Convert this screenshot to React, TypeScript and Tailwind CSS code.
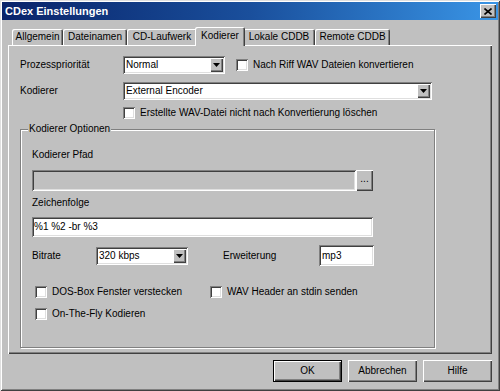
import React from "react";

const raised =
  "shadow-[inset_1px_1px_0_#fff,inset_-1px_-1px_0_#404040,inset_-2px_-2px_0_#808080]";
const sunken =
  "shadow-[inset_1px_1px_0_#808080,inset_-1px_-1px_0_#fff,inset_2px_2px_0_#404040,inset_-2px_-2px_0_#dfdfdf]";

function Arrow() {
  return (
    <svg width="7" height="4" viewBox="0 0 7 4">
      <path d="M0 0H7L3.5 4Z" fill="#000" />
    </svg>
  );
}

function Select({ value, w }: { value: string; w: string }) {
  return (
    <div className={`flex h-[18px] ${w} bg-white p-[2px] ${sunken}`}>
      <div className="flex flex-1 items-center pl-[1px]">{value}</div>
      <div
        className={`flex h-[14px] w-[13px] items-center justify-center bg-[#c0c0c0] ${raised}`}
      >
        <Arrow />
      </div>
    </div>
  );
}

function Check({ label, gap }: { label: string; gap?: boolean }) {
  return (
    <div className="flex items-center">
      <div className={`h-[12px] w-[12px] bg-white ${sunken}`} />
      <span className={gap ? "ml-[5px]" : "ml-[5px]"}>{label}</span>
    </div>
  );
}

function Tab({
  label,
  w,
  active,
}: {
  label: string;
  w: string;
  active?: boolean;
}) {
  if (active) {
    return (
      <div
        className={`relative z-10 -mx-[2px] -mb-px flex h-[19px] ${w} items-center justify-center rounded-t-[2px] bg-[#c0c0c0] pb-[2px] shadow-[inset_1px_1px_0_#fff,inset_-1px_0_0_#404040,inset_-2px_0_0_#808080]`}
      >
        {label}
      </div>
    );
  }
  return (
    <div
      className={`flex h-[16px] ${w} items-center justify-center rounded-t-[2px] shadow-[inset_1px_1px_0_#fff,inset_-1px_0_0_#404040,inset_-2px_0_0_#808080]`}
    >
      {label}
    </div>
  );
}

function Button({ label, def }: { label: string; def?: boolean }) {
  return (
    <div
      className={`flex h-[22px] w-[69px] items-center justify-center ${
        def ? "border border-black" : ""
      } ${raised}`}
    >
      {label}
    </div>
  );
}

export default function App() {
  return (
    <div
      className={`flex h-[391px] w-[500px] flex-col bg-[#c0c0c0] font-['Liberation_Sans',Arial,sans-serif] text-[10px] leading-[12px] text-black shadow-[inset_1px_1px_0_#dfdfdf,inset_-1px_-1px_0_#404040,inset_2px_2px_0_#fff,inset_-2px_-2px_0_#808080]`}
    >
      {/* Title bar */}
      <div className="mx-[2px] mt-[2px] flex h-[18px] items-center bg-gradient-to-r from-[#0a246a] via-[#1a4f9c] to-[#3a95e6] pl-[3px]">
        <span className="flex-1 text-[11px] font-bold text-white">
          CDex Einstellungen
        </span>
        <div
          className={`mr-[2px] flex h-[14px] w-[16px] items-center justify-center bg-[#c0c0c0] ${raised}`}
        >
          <svg width="8" height="7" viewBox="0 0 8 7">
            <path
              d="M0.5 0.5L7.5 6.5M7.5 0.5L0.5 6.5"
              stroke="#000"
              strokeWidth="1.6"
            />
          </svg>
        </div>
      </div>

      {/* Tabs */}
      <div className="ml-[12px] mt-[7px] flex h-[18px] items-end">
        <Tab label="Allgemein" w="w-[51px]" />
        <Tab label="Dateinamen" w="w-[64px]" />
        <Tab label="CD-Laufwerk" w="w-[70px]" />
        <Tab label="Kodierer" w="w-[50px]" active />
        <Tab label="Lokale CDDB" w="w-[72px]" />
        <Tab label="Remote CDDB" w="w-[75px]" />
      </div>

      {/* Panel */}
      <div
        className={`mx-[8px] flex h-[309px] flex-col pl-[12px] pt-[11px] shadow-[inset_1px_1px_0_#fff,inset_-1px_-1px_0_#404040,inset_-2px_-2px_0_#808080]`}
      >
        <div className="flex h-[18px] items-center">
          <span className="w-[103px]">Prozesspriorität</span>
          <Select value="Normal" w="w-[102px]" />
          <div className="ml-[11px]">
            <Check label="Nach Riff WAV Dateien konvertieren" />
          </div>
        </div>
        <div className="mt-[8px] flex h-[18px] items-center">
          <span className="w-[103px]">Kodierer</span>
          <Select value="External Encoder" w="w-[309px]" />
        </div>
        <div className="ml-[103px] mt-[7px] flex h-[12px] items-center">
          <Check label="Erstellte WAV-Datei nicht nach Konvertierung löschen" />
        </div>

        {/* Group box */}
        <div className="relative mt-[10px] h-[219px] w-[415px] border border-[#808080] pl-[11px] pt-[19px] shadow-[inset_1px_1px_0_#fff,1px_1px_0_#fff]">
          <span className="absolute left-[7px] top-[-7px] bg-[#c0c0c0] px-px">
            Kodierer Optionen
          </span>
          <div className="flex h-[12px] items-center">Kodierer Pfad</div>
          <div className="mt-[9px] flex">
            <div className={`h-[21px] w-[324px] bg-[#c0c0c0] ${sunken}`} />
            <div
              className={`flex h-[21px] w-[17px] items-center justify-center bg-[#c0c0c0] pb-[3px] ${raised}`}
            >
              ...
            </div>
          </div>
          <div className="mt-[6px] flex h-[12px] items-center">
            Zeichenfolge
          </div>
          <div
            className={`mt-[8px] flex h-[20px] w-[341px] items-center bg-white pl-[2px] ${sunken}`}
          >
            %1 %2 -br %3
          </div>
          <div className="mt-[8px] flex h-[21px] items-center">
            <span className="w-[64px]">Bitrate</span>
            <Select value="320 kbps" w="w-[92px]" />
            <span className="ml-[35px] w-[96px]">Erweiterung</span>
            <div
              className={`flex h-[21px] w-[55px] items-center bg-white pl-[3px] ${sunken}`}
            >
              mp3
            </div>
          </div>
          <div className="ml-[3px] mt-[20px] flex h-[12px] items-center">
            <div className="w-[175px]">
              <Check label="DOS-Box Fenster verstecken" />
            </div>
            <Check label="WAV Header an stdin senden" />
          </div>
          <div className="ml-[3px] mt-[10px] flex h-[12px] items-center">
            <Check label="On-The-Fly Kodieren" />
          </div>
        </div>
      </div>

      {/* Buttons */}
      <div className="mr-[8px] mt-[6px] flex justify-end gap-[6px]">
        <Button label="OK" def />
        <Button label="Abbrechen" />
        <Button label="Hilfe" />
      </div>
    </div>
  );
}
